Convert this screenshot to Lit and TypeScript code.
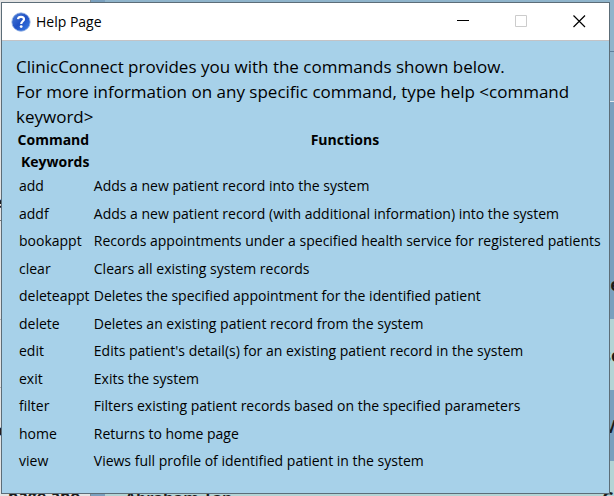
import { LitElement, html, css } from "lit";
import { customElement } from "lit/decorators.js";

const COMMANDS: [string, string][] = [
  ["add", "Adds a new patient record into the system"],
  ["addf", "Adds a new patient record (with additional information) into the system"],
  ["bookappt", "Records appointments under a specified health service for registered patients"],
  ["clear", "Clears all existing system records"],
  ["deleteappt", "Deletes the specified appointment for the identified patient"],
  ["delete", "Deletes an existing patient record from the system"],
  ["edit", "Edits patient's detail(s) for an existing patient record in the system"],
  ["exit", "Exits the system"],
  ["filter", "Filters existing patient records based on the specified parameters"],
  ["home", "Returns to home page"],
  ["view", "Views full profile of identified patient in the system"],
];

/* The application behind the dialog; only its edges show. */
@customElement("app-backdrop")
class AppBackdrop extends LitElement {
  static styles = css`
    :host { display: flex; overflow: hidden; background: #8fb4cb; font: bold 16px/24px "Open Sans", sans-serif; color: #1b1b1b; white-space: nowrap; }
    .side { width: 90px; flex: none; background: #e4e4e4; border-right: 1px solid #7d8b94; overflow: hidden; }
    .row { height: 67px; border-bottom: 1px solid #b5b5b5; text-indent: -7px; }
    .row.first { height: 221px; display: flex; align-items: flex-end; padding-bottom: 6px; box-sizing: border-box; border-color: #777; }
    .row.wide { height: 98px; }
    .row.low { height: 96px; padding-top: 30px; box-sizing: border-box; border: 0; }
    .foot { text-indent: 8px; }
    .main { flex: 1; min-width: 0; display: flex; flex-direction: column; padding-left: 14px; background: #7aa0be; }
    .band { height: 71px; flex: none; display: flex; align-items: center; justify-content: flex-end; background: #7aa0be; }
    .band.alt { background: #b3d4d5; }
    .band.head { height: 51px; background: #8fb4cb; border-bottom: 1px solid #5f7f9b; }
    .band.bar { height: 49px; background: #8fb4cb; border-bottom: 1px solid #dfe8ee; }
    .band.list { height: 146px; }
    .band.last { align-items: flex-start; justify-content: space-between; padding: 25px 0 0 20px; }
    .edge { width: 12px; font-size: 18px; }
  `;
  render() {
    return html`<div class="side">
        <div class="row first">e</div>
        <div class="row wide"></div>
        <div class="row"></div>
        <div class="row low">o</div>
        <div class="foot">page abo</div>
      </div>
      <div class="main">
        <div class="band head"></div>
        <div class="band bar"></div>
        <div class="band list"></div>
        <div class="band"><span class="edge">re</span></div>
        <div class="band alt"><span class="edge">se</span></div>
        <div class="band"><span class="edge">M</span></div>
        <div class="band alt last"><span>Abraham Tan</span><span class="edge">Ca</span></div>
      </div>`;
  }
}

@customElement("app-root")
class AppRoot extends LitElement {
  static styles = css`
    :host { display: flex; position: relative; min-height: 100vh; box-sizing: border-box; padding: 2px 4px 2px 1px; overflow: hidden; font-family: "Open Sans", "Noto Sans", sans-serif; color: #000; }
    .backdrop { position: absolute; inset: 0; }
    .window { position: relative; flex: 1; min-width: 0; display: flex; flex-direction: column; border: 1px solid #5c6d78; background: #a7d1e9; }
    .titlebar { display: flex; align-items: center; height: 37px; padding-right: 1px; background: #fff; border-bottom: 1px solid #c3c3c6; }
    .logo { width: 20px; height: 20px; margin: 0 5px 0 9px; }
    .title { flex: 1; margin: 0; font-size: 14px; font-weight: 400; }
    .control { width: 58px; height: 37px; padding: 0; border: 0; background: none; display: grid; place-items: center; color: #000; }
    .control:disabled { color: #ccc; }
    .intro { margin: 0; padding: 13px 14px 0; font-size: 17px; line-height: 25px; }
    table { border-collapse: collapse; margin-left: 14px; font-size: 14px; white-space: nowrap; }
    th, td { padding: 0; text-align: left; }
    th { line-height: 22px; vertical-align: top; text-align: center; white-space: pre; }
    th:last-child { padding-right: 10px; }
    td { height: 25px; padding: 0 0 2px 3px; }
    tr:nth-child(even) td { height: 26px; }
  `;
  render() {
    return html`<app-backdrop class="backdrop" aria-hidden="true"></app-backdrop>
      <section class="window">
        <header class="titlebar">
          <svg class="logo" viewBox="0 0 20 20" aria-hidden="true">
            <defs>
              <linearGradient id="ball" x1="0" y1="0" x2="1" y2="1">
                <stop offset="0" stop-color="#4d80d8" />
                <stop offset="0.5" stop-color="#1f50c4" />
                <stop offset="1" stop-color="#3f83ea" />
              </linearGradient>
            </defs>
            <circle cx="10" cy="10" r="9.2" fill="url(#ball)" stroke="#9ab6e4" stroke-width="0.8" />
            <path d="M7 7.2Q7.2 4.8 10 4.8Q13 4.8 13 7.2C13 9.2 10.2 9.4 10.2 12" fill="none" stroke="#fff" stroke-width="2.2" />
            <circle cx="10.2" cy="14.6" r="1.4" fill="#fff" />
          </svg>
          <h1 class="title">Help Page</h1>
          <button class="control" aria-label="Minimize"><svg width="13" height="13"><path d="M0 5.5H12" stroke="currentColor" /></svg></button>
          <button class="control" aria-label="Maximize" disabled><svg width="13" height="13"><path d="M.5.5H11.5V11.5H.5Z" fill="none" stroke="currentColor" /></svg></button>
          <button class="control" aria-label="Close"><svg width="13" height="13"><path d="M.5.5L12 12M12 .5L.5 12" stroke="currentColor" stroke-width="1.2" /></svg></button>
        </header>
        <p class="intro">ClinicConnect provides you with the commands shown below.<br />For more information on any specific command, type help &lt;command keyword&gt;</p>
        <table>
          <thead><tr><th scope="col">Command<br /> Keywords</th><th scope="col">Functions</th></tr></thead>
          <tbody>${COMMANDS.map(([k, f]) => html`<tr><td>${k}</td><td>${f}</td></tr>`)}</tbody>
        </table>
      </section>`;
  }
}
